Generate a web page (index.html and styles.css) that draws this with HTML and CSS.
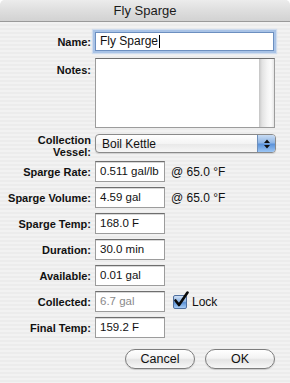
FILE: index.html
```html
<!DOCTYPE html>
<html>
<head>
<meta charset="utf-8">
<link rel="stylesheet" href="styles.css">
</head>
<body>
<div class="window">
  <div class="titlebar">Fly Sparge</div>
  <div class="content">
    <div class="row row-name">
      <div class="lbl">Name:</div>
      <div class="field field-name">Fly Sparge<span class="caret"></span></div>
    </div>
    <div class="row row-notes">
      <div class="lbl lbl-top">Notes:</div>
      <div class="notes"><div class="scroll"></div></div>
    </div>
    <div class="row row-vessel">
      <div class="lbl lbl-two">Collection<br>Vessel:</div>
      <div class="popup">
        <span class="popup-text">Boil Kettle</span>
        <span class="popup-arrows">
          <svg width="8" height="12" viewBox="0 0 8 12"><path d="M4 1.5 L7 5 L1 5 Z M4 10.5 L7 7 L1 7 Z" fill="#111"/></svg>
        </span>
      </div>
    </div>
    <div class="row row-first">
      <div class="lbl">Sparge Rate:</div>
      <div class="field field-small">0.511 gal/lb</div>
      <div class="extra">@ 65.0 °F</div>
    </div>
    <div class="row">
      <div class="lbl">Sparge Volume:</div>
      <div class="field field-small">4.59 gal</div>
      <div class="extra">@ 65.0 °F</div>
    </div>
    <div class="row">
      <div class="lbl">Sparge Temp:</div>
      <div class="field field-small">168.0 F</div>
    </div>
    <div class="row">
      <div class="lbl">Duration:</div>
      <div class="field field-small">30.0 min</div>
    </div>
    <div class="row">
      <div class="lbl">Available:</div>
      <div class="field field-small">0.01 gal</div>
    </div>
    <div class="row">
      <div class="lbl">Collected:</div>
      <div class="field field-small field-disabled">6.7 gal</div>
      <div class="check">
        <span class="box">
          <svg class="tick" width="16" height="17" viewBox="0 0 16 17"><path d="M2.5 9.5 L6 14 L14.5 1.5" fill="none" stroke="#0a0a0a" stroke-width="2.6" stroke-linecap="round" stroke-linejoin="round"/></svg>
        </span>
        <span class="check-text">Lock</span>
      </div>
    </div>
    <div class="row">
      <div class="lbl">Final Temp:</div>
      <div class="field field-small">159.2 F</div>
    </div>
    <div class="buttons">
      <div class="btn">Cancel</div>
      <div class="btn">OK</div>
    </div>
  </div>
</div>
</body>
</html>
```
FILE: styles.css
```css
html, body {
  margin: 0;
  padding: 0;
  background: #ffffff;
}
body {
  font-family: "Liberation Sans", Arial, sans-serif;
  color: #111;
}
.window {
  width: 290px;
  height: 383px;
  border-radius: 5px 5px 0 0;
  overflow: hidden;
  background: repeating-linear-gradient(to bottom, #ececec 0, #ececec 2px, #f2f2f2 2px, #f2f2f2 4px);
}
.titlebar {
  height: 21px;
  line-height: 21px;
  text-align: center;
  font-size: 13px;
  color: #1a1a1a;
  background: linear-gradient(to bottom, #ececec 0%, #dedede 50%, #d2d2d2 100%);
  border-bottom: 1px solid #9a9a9a;
}
.content {
  display: flex;
  flex-direction: column;
}
.row {
  display: flex;
  align-items: center;
  margin-top: 5px;
  height: 21px;
}
.lbl {
  width: 91px;
  flex: none;
  text-align: right;
  font-size: 11px;
  font-weight: bold;
  color: #111;
  margin-right: 4px;
}
.field {
  box-sizing: border-box;
  height: 21px;
  background: #fff;
  border: 1px solid #9c9c9c;
  border-top-color: #6e6e6e;
  box-shadow: inset 0 1px 0 #d8d8d8;
  font-size: 11.5px;
  line-height: 18px;
  padding-left: 4px;
  color: #111;
  white-space: nowrap;
  overflow: hidden;
}
.row-name {
  margin-top: 10px;
  height: 19px;
}
.field-name {
  width: 179px;
  height: 19px;
  line-height: 17px;
  font-size: 12px;
  overflow: visible;
  border-color: #6c8fc0;
  box-shadow: 0 0 0 2px #a9c3e6, 0 0 1px 3px #cfdcee;
}
.caret {
  display: inline-block;
  width: 1px;
  height: 13px;
  background: #000;
  vertical-align: -3px;
  margin-left: 1px;
}
.row-notes {
  margin-top: 7px;
  height: 70px;
  align-items: flex-start;
}
.lbl-top {
  padding-top: 6px;
}
.notes {
  box-sizing: border-box;
  width: 180px;
  height: 70px;
  background: #fff;
  border: 1px solid #9c9c9c;
  border-top-color: #6e6e6e;
  display: flex;
  justify-content: flex-end;
}
.scroll {
  width: 15px;
  height: 100%;
  background: linear-gradient(to right, #c4c4c4 0, #e2e2e2 20%, #f4f4f4 55%, #fbfbfb 80%, #e6e6e6 100%);
}
.row-vessel {
  margin-top: 6px;
  height: 19px;
  overflow: visible;
}
.lbl-two {
  line-height: 12px;
  margin-top: 4px;
}
.popup {
  box-sizing: border-box;
  width: 181px;
  height: 19px;
  border: 1px solid #8a8a8a;
  border-radius: 4px;
  background: linear-gradient(to bottom, #ffffff 0%, #f4f4f4 50%, #e8e8e8 51%, #f6f6f6 100%);
  display: flex;
  align-items: center;
  justify-content: space-between;
  box-shadow: 0 1px 1px rgba(0,0,0,0.12);
}
.popup-text {
  font-size: 12px;
  padding-left: 6px;
}
.popup-arrows {
  width: 17px;
  height: 17px;
  border-radius: 0 3px 3px 0;
  background: linear-gradient(to bottom, #c9dcf3 0%, #8fb6e6 45%, #5c93da 55%, #9cc6f5 100%);
  border-left: 1px solid #6f8fba;
  display: flex;
  align-items: center;
  justify-content: center;
}
.popup-arrows svg { display: block; }
.row-first {
  margin-top: 8px;
}
.field-small {
  width: 70px;
}
.field-disabled {
  color: #8a8a8a;
}
.extra {
  font-size: 12px;
  margin-left: 6px;
  color: #111;
}
.check {
  display: flex;
  align-items: center;
  margin-left: 8px;
}
.box {
  position: relative;
  box-sizing: border-box;
  width: 14px;
  height: 14px;
  border: 1px solid #4f6f9e;
  border-radius: 2px;
  background: linear-gradient(to bottom, #cfe0f5 0%, #8db4e4 45%, #5c92d6 55%, #a8cdf6 100%);
}
.tick {
  position: absolute;
  left: -1px;
  top: -5px;
}
.check-text {
  font-size: 12px;
  margin-left: 5px;
}
.buttons {
  display: flex;
  justify-content: flex-end;
  gap: 10px;
  margin-top: 11px;
  padding-right: 15px;
}
.btn {
  box-sizing: border-box;
  width: 70px;
  height: 20px;
  border: 1px solid #7d7d7d;
  border-radius: 10px;
  background: linear-gradient(to bottom, #ffffff 0%, #f3f3f3 45%, #e4e4e4 55%, #f7f7f7 100%);
  box-shadow: 0 1px 1px rgba(0,0,0,0.15);
  font-size: 12.5px;
  line-height: 18px;
  text-align: center;
  color: #111;
}
```
